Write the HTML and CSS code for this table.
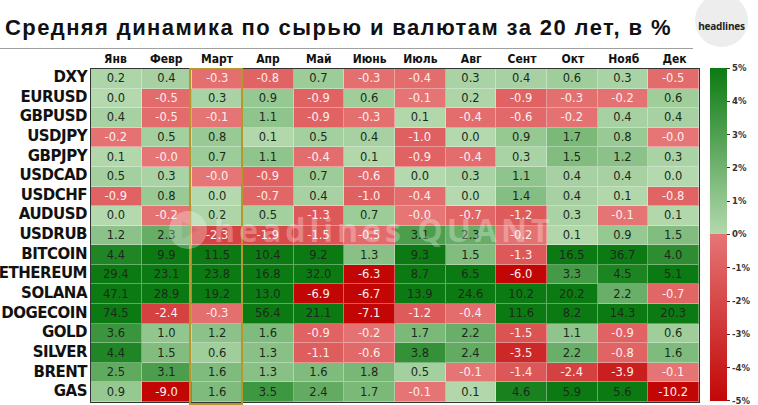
FILE: index.html
```html
<!DOCTYPE html>
<html lang="ru">
<head>
<meta charset="utf-8">
<link rel="stylesheet" href="styles.css">
</head>
<body>
<div class="page">
  <header class="top">
    <h1 class="title">Средняя динамика по сырью и валютам за 20 лет, в %</h1>
    <div class="logo">headlines</div>
  </header>
  <div class="chart">
    <div class="labels" id="labels">
      <div class="spacer"></div>
    </div>
    <div class="map">
      <div class="months">
        <span>Янв</span><span>Февр</span><span>Март</span><span>Апр</span><span>Май</span><span>Июнь</span><span>Июль</span><span>Авг</span><span>Сент</span><span>Окт</span><span>Нояб</span><span>Дек</span>
      </div>
      <div class="grid" id="grid"></div>
      <div class="mark"></div>
      <div class="watermark">
        <svg class="wm-icon" viewBox="0 0 40 40" width="40" height="40"><circle cx="20" cy="20" r="19" fill="#fff"/><path d="M14 11 L30 20 L14 29 Z" fill="#d9d9d9"/></svg>
        <span class="wm-text">headlines QUANT</span>
      </div>
    </div>
    <div class="cbar-wrap">
      <div class="cbar"></div>
      <div class="ticks">
        <div class="tick"><i></i>5%</div>
        <div class="tick"><i></i>4%</div>
        <div class="tick"><i></i>3%</div>
        <div class="tick"><i></i>2%</div>
        <div class="tick"><i></i>1%</div>
        <div class="tick"><i></i>0%</div>
        <div class="tick"><i></i>-1%</div>
        <div class="tick"><i></i>-2%</div>
        <div class="tick"><i></i>-3%</div>
        <div class="tick"><i></i>-4%</div>
        <div class="tick"><i></i>-5%</div>
      </div>
    </div>
  </div>
</div>
<script src="script.js"></script>
</body>
</html>
```
FILE: styles.css
```css
* { box-sizing: border-box; }
html, body { margin: 0; padding: 0; background: #fff; }
body { width: 758px; height: 405px; overflow: hidden; font-family: "DejaVu Sans", sans-serif; color: #111; }
.page { position: relative; width: 758px; height: 405px; overflow: hidden; }

.top { position: relative; height: 50px; }
.title {
  margin: 0;
  width: 693px;
  height: 49px;
  padding: 13px 0 0 5px;
  font-family: "Liberation Sans", Arial, sans-serif;
  font-weight: 700;
  font-size: 22px;
  line-height: 30px;
  letter-spacing: 1.4px;
  color: #111;
  white-space: nowrap;
  border-bottom: 1.5px solid #a0a0a0;
}
.logo {
  position: absolute;
  left: 695px; top: -6px;
  width: 53px; height: 53px;
  border-radius: 50%;
  background: #ededed;
  display: flex; align-items: center; justify-content: center;
  padding-top: 10px;
  font-family: "Open Sans", "Liberation Sans", sans-serif;
  font-weight: 700; font-size: 10px; letter-spacing: -0.2px;
  color: #222;
}

.chart { display: flex; }
.labels {
  width: 90px;
  flex: none;
  display: grid;
  grid-template-columns: 90px;
  grid-template-rows: 18px repeat(17, 19.65px);
}
.label {
  min-width: 0;
  padding-right: 3px;
  font-weight: 700;
  font-size: 15px;
  letter-spacing: -0.5px;
  line-height: 19.65px;
  white-space: nowrap;
  color: #111;
  display: flex; justify-content: flex-end;
}
.map { position: relative; width: 610px; flex: none; }
.months { height: 18px; display: grid; grid-template-columns: repeat(12, 1fr); }
.months span {
  text-align: center;
  font-weight: 700; font-size: 12px; line-height: 18px;
  font-stretch: condensed;
  color: #111;
}
.grid {
  display: grid;
  grid-template-columns: repeat(12, 1fr);
  grid-template-rows: repeat(17, 1fr);
  height: 335px;
  border: 1px solid #333;
}
.cell {
  display: flex; align-items: center; justify-content: center;
  font-size: 11.5px;
  border-right: 1px solid rgba(255,255,255,0.35);
  border-bottom: 1px solid rgba(255,255,255,0.35);
}
.cell.pos { color: #1c2a1c; }
.cell.neg { color: #fdeeee; }
.mark {
  position: absolute;
  left: 99px; top: 18px;
  width: 54px; height: 337px;
  border: 2px solid #b8962e;
  pointer-events: none;
}
.watermark {
  position: absolute;
  left: 78px; top: 158px;
  display: flex; align-items: center; gap: 6px;
  opacity: 0.28;
  pointer-events: none;
}
.wm-text {
  font-family: "Open Sans", "Liberation Sans", sans-serif;
  font-weight: 700; font-size: 32px; letter-spacing: 4px;
  color: #fff;
}

.cbar-wrap { display: flex; margin-left: 10px; padding-top: 18px; }
.cbar {
  width: 17px; height: 333px;
  background: linear-gradient(to bottom, #0c7a12 0%, #b4d9ae 50%, #e57575 50%, #c20707 100%);
}
.ticks {
  height: 333px;
  display: flex; flex-direction: column; justify-content: space-between;
}
.tick {
  height: 0;
  display: flex; align-items: center;
  font-weight: 700; font-size: 8.5px; color: #333;
  white-space: nowrap;
}
.tick i { display: inline-block; width: 3px; height: 1px; background: #333; margin-right: 2px; }
```
FILE: script.js
```js
var rows = [
  ["DXY", "0.2 0.4 -0.3 -0.8 0.7 -0.3 -0.4 0.3 0.4 0.6 0.3 -0.5"],
  ["EURUSD", "0.0 -0.5 0.3 0.9 -0.9 0.6 -0.1 0.2 -0.9 -0.3 -0.2 0.6"],
  ["GBPUSD", "0.4 -0.5 -0.1 1.1 -0.9 -0.3 0.1 -0.4 -0.6 -0.2 0.4 0.4"],
  ["USDJPY", "-0.2 0.5 0.8 0.1 0.5 0.4 -1.0 0.0 0.9 1.7 0.8 -0.0"],
  ["GBPJPY", "0.1 -0.0 0.7 1.1 -0.4 0.1 -0.9 -0.4 0.3 1.5 1.2 0.3"],
  ["USDCAD", "0.5 0.3 -0.0 -0.9 0.7 -0.6 0.0 0.3 1.1 0.4 0.4 0.0"],
  ["USDCHF", "-0.9 0.8 0.0 -0.7 0.4 -1.0 -0.4 0.0 1.4 0.4 0.1 -0.8"],
  ["AUDUSD", "0.0 -0.2 0.2 0.5 -1.3 0.7 -0.0 -0.7 -1.2 0.3 -0.1 0.1"],
  ["USDRUB", "1.2 2.3 -2.3 -1.9 -1.5 -0.5 3.1 2.3 -0.2 0.1 0.9 1.5"],
  ["BITCOIN", "4.4 9.9 11.5 10.4 9.2 1.3 9.3 1.5 -1.3 16.5 36.7 4.0"],
  ["ETHEREUM", "29.4 23.1 23.8 16.8 32.0 -6.3 8.7 6.5 -6.0 3.3 4.5 5.1"],
  ["SOLANA", "47.1 28.9 19.2 13.0 -6.9 -6.7 13.9 24.6 10.2 20.2 2.2 -0.7"],
  ["DOGECOIN", "74.5 -2.4 -0.3 56.4 21.1 -7.1 -1.2 -0.4 11.6 8.2 14.3 20.3"],
  ["GOLD", "3.6 1.0 1.2 1.6 -0.9 -0.2 1.7 2.2 -1.5 1.1 -0.9 0.6"],
  ["SILVER", "4.4 1.5 0.6 1.3 -1.1 -0.6 3.8 2.4 -3.5 2.2 -0.8 1.6"],
  ["BRENT", "2.5 3.1 1.6 1.3 1.6 1.8 0.5 -0.1 -1.4 -2.4 -3.9 -0.1"],
  ["GAS", "0.9 -9.0 1.6 3.5 2.4 1.7 -0.1 0.1 4.6 5.9 5.6 -10.2"]
];
function mix(a, b, t) {
  return "rgb(" + [0, 1, 2].map(function (i) { return Math.round(a[i] + (b[i] - a[i]) * t); }).join(",") + ")";
}
var G0 = [180, 217, 174], G1 = [12, 122, 18];
var R0 = [230, 118, 118], R1 = [194, 6, 6];
var labels = document.getElementById("labels");
var grid = document.getElementById("grid");
rows.forEach(function (r) {
  var l = document.createElement("div");
  l.className = "label";
  l.textContent = r[0];
  labels.appendChild(l);
  r[1].split(" ").forEach(function (s) {
    var v = parseFloat(s);
    var neg = s.charAt(0) === "-";
    var t = Math.min(Math.abs(v) / 5, 1);
    var c = document.createElement("div");
    c.className = "cell " + (neg ? "neg" : "pos");
    c.style.background = neg ? mix(R0, R1, t) : mix(G0, G1, t);
    c.textContent = s;
    grid.appendChild(c);
  });
});
```
